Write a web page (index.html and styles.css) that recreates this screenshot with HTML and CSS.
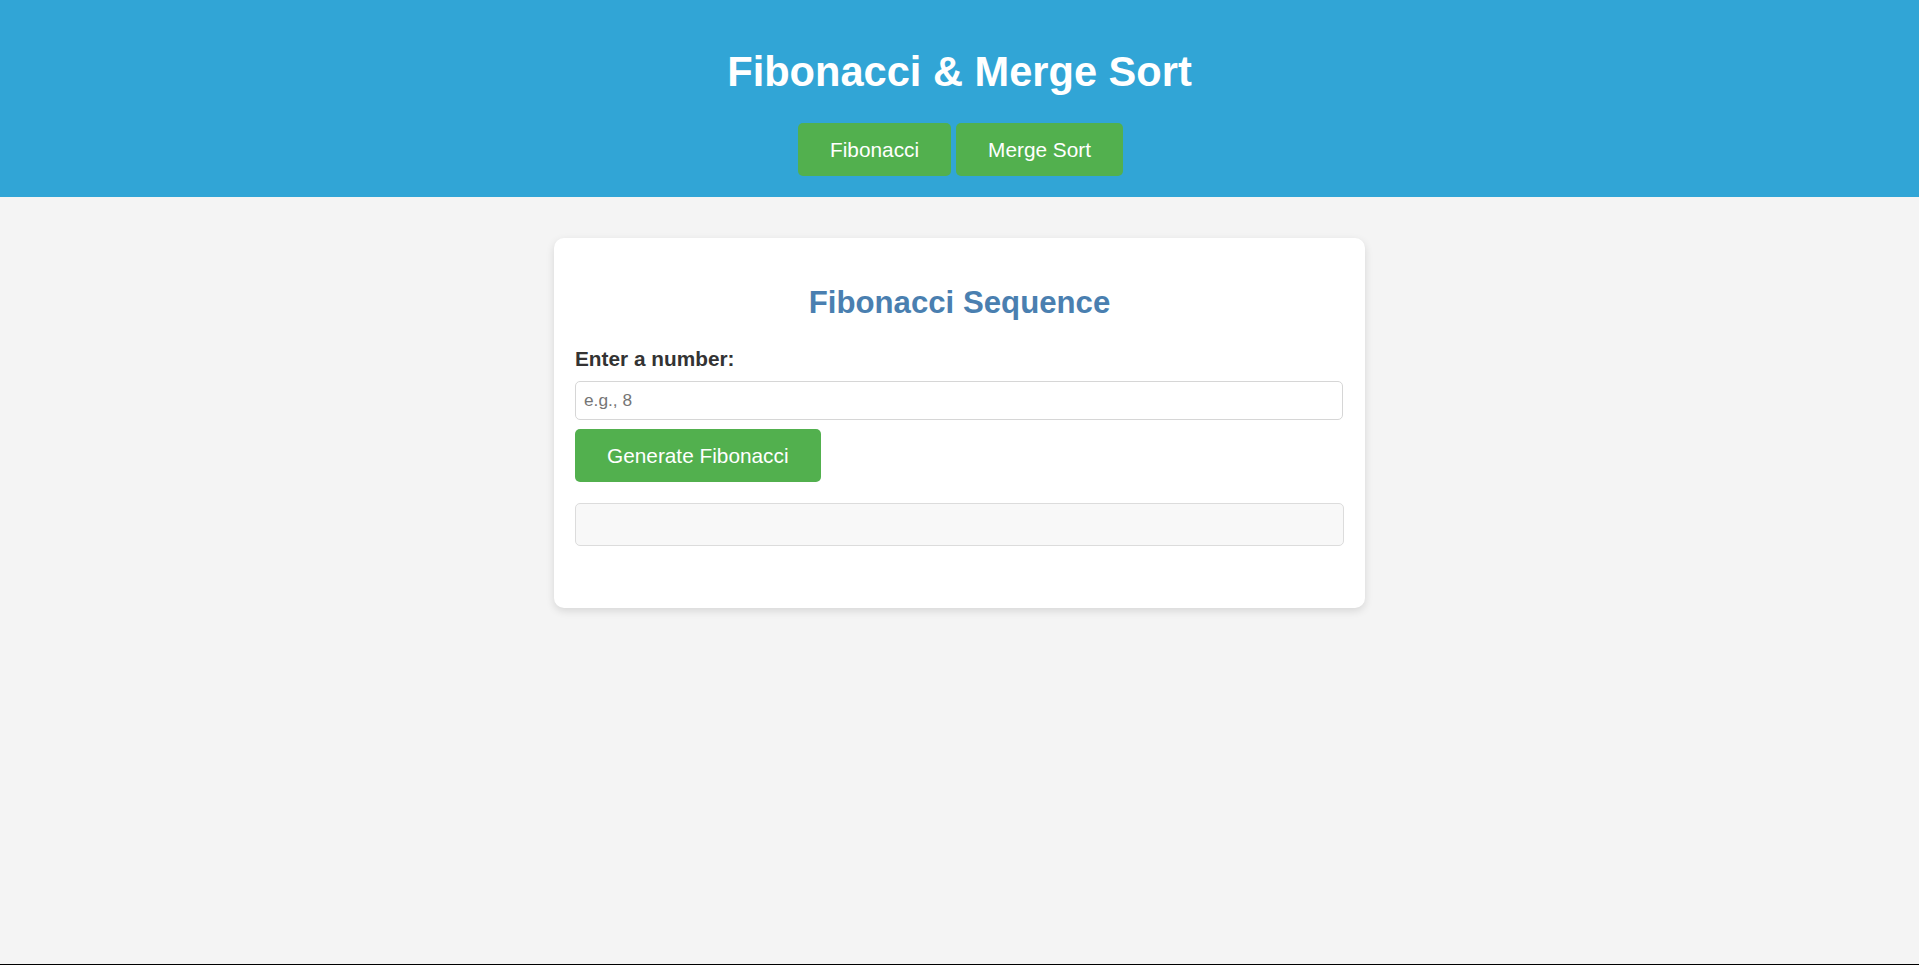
FILE: index.html
```html
<!DOCTYPE html>
<html lang="en">
<head>
<meta charset="UTF-8">
<title>Fibonacci &amp; Merge Sort</title>
<link rel="stylesheet" href="styles.css">
</head>
<body>
<header class="site-header">
  <h1 class="site-title">Fibonacci &amp; Merge Sort</h1>
  <nav class="nav">
    <button class="btn nav-btn">Fibonacci</button>
    <button class="btn nav-btn">Merge Sort</button>
  </nav>
</header>
<main class="card">
  <h2 class="card-title">Fibonacci Sequence</h2>
  <label class="field-label" for="num">Enter a number:</label>
  <input class="field-input" id="num" type="number" placeholder="e.g., 8">
  <button class="btn action-btn">Generate Fibonacci</button>
  <div class="result"></div>
</main>
<div class="bottom-line"></div>
</body>
</html>
```
FILE: styles.css
```css
html, body {
  margin: 0;
  padding: 0;
}
body {
  background: #f4f4f4;
  font-family: "Liberation Sans", Arial, sans-serif;
  font-size: 20.8px;
  color: #333;
  min-height: 965px;
}
.site-header {
  background: #31a5d6;
  padding: 21px 0;
  text-align: center;
}
.site-title {
  margin: 0 0 27px;
  padding-top: 27px;
  font-size: 41.6px;
  line-height: 48px;
  font-weight: bold;
  color: #fff;
}
.nav {
  display: flex;
  justify-content: center;
  gap: 5px;
  padding-left: 2px;
}
.btn {
  font-family: "Liberation Sans", Arial, sans-serif;
  font-size: 20.8px;
  line-height: 25px;
  color: #fff;
  background: #52b04e;
  border: none;
  border-radius: 5px;
  padding: 14px 32px;
  cursor: pointer;
}
.card {
  display: block;
  width: 769px;
  margin: 41px auto 0;
  padding: 21px 21px 62px;
  background: #fff;
  border-radius: 10px;
  box-shadow: 0 3px 8px rgba(0, 0, 0, 0.12);
}
.card-title {
  margin: 26px 0;
  font-size: 31.2px;
  line-height: 36px;
  text-align: center;
  color: #4a7fb0;
}
.field-label {
  display: block;
  font-weight: bold;
  font-size: 20.8px;
  line-height: 24px;
  color: #333;
  margin-bottom: 10px;
}
.field-input {
  display: block;
  box-sizing: border-box;
  width: 768px;
  height: 39px;
  padding: 0 8px;
  font-family: "Liberation Sans", Arial, sans-serif;
  font-size: 17.3px;
  border: 1px solid #d6d6d6;
  border-radius: 5px;
  background: #fff;
  margin-bottom: 9px;
}
.field-input::placeholder {
  color: #757575;
}
.action-btn {
  display: block;
}
.result {
  box-sizing: border-box;
  width: 769px;
  height: 43px;
  margin-top: 21px;
  background: #f8f8f8;
  border: 1px solid #dcdcdc;
  border-radius: 5px;
}
.bottom-line {
  position: fixed;
  left: 0;
  right: 0;
  bottom: 0;
  height: 1px;
  background: #000;
}
```
